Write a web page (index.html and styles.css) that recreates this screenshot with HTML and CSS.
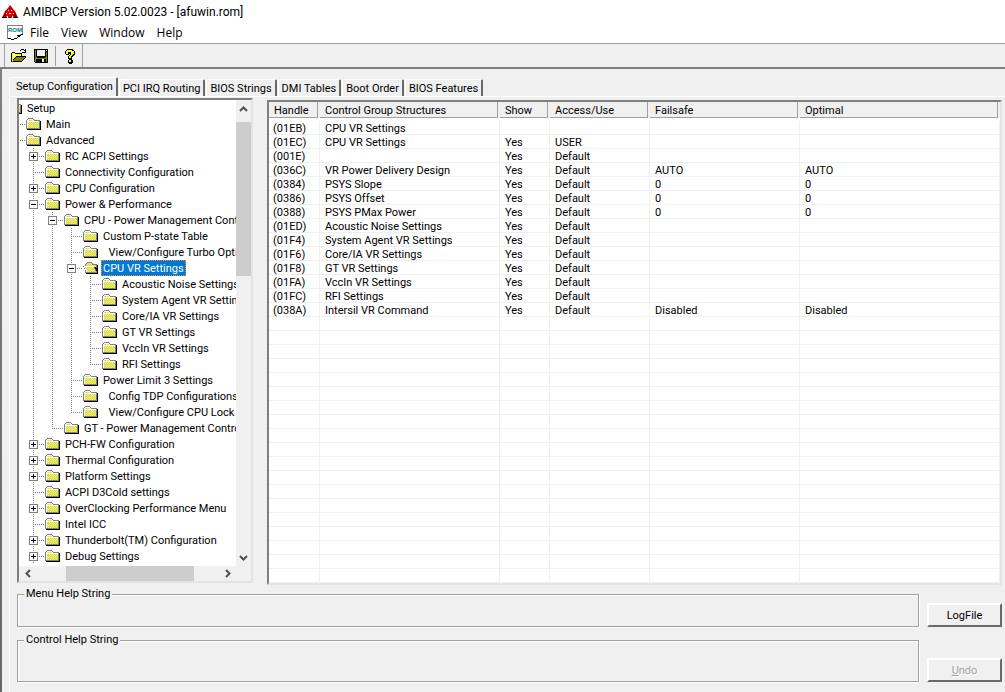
FILE: index.html
```html
<!DOCTYPE html>
<html lang="en">
<head>
<meta charset="utf-8">
<title>AMIBCP Version 5.02.0023 - [afuwin.rom]</title>
<link rel="stylesheet" href="styles.css">
</head>
<body>
<svg class="defs" aria-hidden="true">
  <defs>
    <pattern id="dither" width="2" height="2" patternUnits="userSpaceOnUse">
      <rect width="2" height="2" fill="#c8c8c8"/><path fill="#ff0" d="M0 0h1v1H0zM1 1h1v1H1z"/>
    </pattern>
    <symbol id="folder" viewBox="0 0 16 16">
      <path fill="#808080" d="M2 2h5v1h1v1h6v9H0V4h1V3h1z"/>
      <path fill="#fff" d="M2 3h5v1h1v1h5v1H2v6H1V4h1z"/>
      <path fill="url(#dither)" d="M2 4h5v1h6v7H2z"/>
      <path fill="#fff" d="M2 5h11v1H2z"/>
      <path fill="#000" d="M14 5h1v9H1v-1h13z"/>
    </symbol>
    <symbol id="folder-open" viewBox="0 0 16 16">
      <path fill="#808080" d="M4 2h5v1h1v1h4v9H2V4h1V3h1z"/>
      <path fill="url(#dither)" d="M4 3h5v2h4v7H3V4h1z"/>
      <path fill="#808080" d="M0 6h11v1h1v2h1v2h1v2H3v-2H2V9H1V7H0z"/>
      <path fill="#fff" d="M1 6h10v1H2v1h1v2h1v2H3v-2H2V8H1z"/>
      <path fill="url(#dither)" d="M2 7h9v2h1v2h1v1H4v-2H3V8H2z"/>
      <path fill="#000" d="M14 5h1v9H3v-1h11v-2h-1V9h-1V7h1v1h1z"/>
    </symbol>
  </defs>
</svg>

<header class="titlebar">
  <svg class="app-icon" viewBox="0 0 16 16" aria-hidden="true">
    <path fill="#e80000" d="M8 1l2 3 3 3 3 7H0l3-7 3-3z"/>
    <path fill="#700" d="M8 1l2 3 1 2-2-1zM12 7l4 7h-3l-2-5zM4 7l1 2-4 5H0z"/>
    <path fill="#fff" d="M6 6h1v1H6zM9 6h1v1H9zM4 9h1v1H4zM11 9h1v1h-1zM5 12h1v2H5zM10 12h1v2h-1zM7 9h2v1H7z"/>
    <path fill="#000" d="M0 13h5v1H0zM7 13h2v1H7zM12 13h4v1h-4zM7 4h1v1H7z"/>
  </svg>
  <h1 class="title">AMIBCP Version 5.02.0023 - [afuwin.rom]</h1>
</header>
<nav class="menubar">
  <svg class="doc-icon" viewBox="0 0 16 16" aria-hidden="true">
    <path fill="#fff" stroke="#808080" d="M.5 14V.500h15v8l-5 4"/>
    <text x="1" y="7" class="doc-text">ROM</text>
    <path fill="none" stroke="#000" d="M1 13.500h3M4 14.500h3M7 13.500h3M10 12.500h1M11 11.500h2M13 10.500h1M14 9.500h2M10 10.500h3"/>
  </svg>
  <button class="menu">File</button>
  <button class="menu">View</button>
  <button class="menu">Window</button>
  <button class="menu">Help</button>
</nav>
<div class="toolbar" role="toolbar">
  <div class="tools">
    <button class="tool" aria-label="Open"><svg viewBox="0 0 16 16" aria-hidden="true">
      <path fill="#ff0" d="M1 5h3v1h7v3H5l-4 5z"/><path fill="#fff" d="M2 6h1v1H2zM4 6h1v1H4zM3 7h1v1H3zM5 7h1v1H5zM7 7h1v1H7zM9 7h1v1H9zM2 8h1v1H2zM4 8h1v1H4zM6 8h1v1H6zM8 8h1v1H8zM3 9h1v1H3zM2 10h1v1H2z"/>
      <path fill="#808000" d="M5 9h10l-4 5H1z"/>
      <path fill="#000" d="M1 4h3v1h7v3h-1V6H4V5H1v8h1v1h9v-1h1v-1h1v-1h1v-1h1V8H5v1h9v1h-1v1h-1v1h-1v1H1v1H0V5h1zM4 9h1v1H4zM3 10h1v1H3zM2 11h1v1H2zM9 2h1v1H9zM10 1h3v1h-3zM13 2h1v1h-1zM14 1h1v4h-4V4h3z"/>
    </svg></button>
    <button class="tool" aria-label="Save"><svg viewBox="0 0 16 16" aria-hidden="true">
      <path fill="#000" d="M1 1h14v14H2l-1-1z"/><path fill="#808000" d="M2 2h1v7h1v1h8V9h1V4h1v10h-1v-3H3v3H2z"/>
      <path fill="#efefef" d="M4 2h8v6H4zM13 2h1v1h-1zM9 11h2v3H9z"/>
    </svg></button>
    <span class="tool-sep"></span>
    <button class="tool" aria-label="Help"><svg viewBox="0 0 16 16" aria-hidden="true">
      <path fill="#000" d="M5 1h6v1h1v1h1v4h-1v1h-1v1h-1v2H6V8h1V7h1V6H7v1H4V6H3V3h1V2h1zM7 11h3v1h1v3h-1v1H7v-1H6v-3h1z"/>
      <path fill="#ff0" d="M5 2h5v1h2v3h-1v1h-1v1H9v2H7V8h1V7h1V4H6v2H4V3h1zM7 12h2v2H7z"/>
    </svg></button>
  </div>
</div>

<main class="client">
  <div class="tabs" role="tablist">
    <button class="tab tab-active" role="tab" aria-selected="true">Setup Configuration</button>
    <button class="tab" role="tab">PCI IRQ Routing</button>
    <button class="tab" role="tab">BIOS Strings</button>
    <button class="tab" role="tab">DMI Tables</button>
    <button class="tab" role="tab">Boot Order</button>
    <button class="tab" role="tab">BIOS Features</button>
  </div>
  <section class="page">
    <div class="panes">
      <div class="tree-box">
        <div class="tree-view">
          <ul class="tree" role="tree">
            <li><div class="row row-root"><svg class="folder"><use href="#folder"/></svg><span class="label">Setup</span></div>
              <ul>
                <li><div class="row"><svg class="folder"><use href="#folder"/></svg><span class="label">Main</span></div></li>
                <li><div class="row"><svg class="folder"><use href="#folder"/></svg><span class="label">Advanced</span></div>
                  <ul>
                    <li><div class="row"><button class="twist plus" aria-label="Expand"></button><svg class="folder"><use href="#folder"/></svg><span class="label">RC ACPI Settings</span></div></li>
                    <li><div class="row"><svg class="folder"><use href="#folder"/></svg><span class="label">Connectivity Configuration</span></div></li>
                    <li><div class="row"><button class="twist plus" aria-label="Expand"></button><svg class="folder"><use href="#folder"/></svg><span class="label">CPU Configuration</span></div></li>
                    <li><div class="row"><button class="twist" aria-label="Collapse"></button><svg class="folder"><use href="#folder"/></svg><span class="label">Power &amp; Performance</span></div>
                      <ul>
                        <li><div class="row"><button class="twist" aria-label="Collapse"></button><svg class="folder"><use href="#folder"/></svg><span class="label">CPU - Power Management Control</span></div>
                          <ul>
                            <li><div class="row"><svg class="folder"><use href="#folder"/></svg><span class="label">Custom P-state Table</span></div></li>
                            <li><div class="row"><svg class="folder"><use href="#folder"/></svg><span class="label">  View/Configure Turbo Options</span></div></li>
                            <li><div class="row"><button class="twist" aria-label="Collapse"></button><svg class="folder"><use href="#folder-open"/></svg><span class="label selected">CPU VR Settings</span></div>
                              <ul>
                                <li><div class="row"><svg class="folder"><use href="#folder"/></svg><span class="label">Acoustic Noise Settings</span></div></li>
                                <li><div class="row"><svg class="folder"><use href="#folder"/></svg><span class="label">System Agent VR Settings</span></div></li>
                                <li><div class="row"><svg class="folder"><use href="#folder"/></svg><span class="label">Core/IA VR Settings</span></div></li>
                                <li><div class="row"><svg class="folder"><use href="#folder"/></svg><span class="label">GT VR Settings</span></div></li>
                                <li><div class="row"><svg class="folder"><use href="#folder"/></svg><span class="label">VccIn VR Settings</span></div></li>
                                <li><div class="row"><svg class="folder"><use href="#folder"/></svg><span class="label">RFI Settings</span></div></li>
                              </ul>
                            </li>
                            <li><div class="row"><svg class="folder"><use href="#folder"/></svg><span class="label">Power Limit 3 Settings</span></div></li>
                            <li><div class="row"><svg class="folder"><use href="#folder"/></svg><span class="label">  Config TDP Configurations</span></div></li>
                            <li><div class="row"><svg class="folder"><use href="#folder"/></svg><span class="label">  View/Configure CPU Lock</span></div></li>
                          </ul>
                        </li>
                        <li><div class="row"><svg class="folder"><use href="#folder"/></svg><span class="label">GT - Power Management Control</span></div></li>
                      </ul>
                    </li>
                    <li><div class="row"><button class="twist plus" aria-label="Expand"></button><svg class="folder"><use href="#folder"/></svg><span class="label">PCH-FW Configuration</span></div></li>
                    <li><div class="row"><button class="twist plus" aria-label="Expand"></button><svg class="folder"><use href="#folder"/></svg><span class="label">Thermal Configuration</span></div></li>
                    <li><div class="row"><button class="twist plus" aria-label="Expand"></button><svg class="folder"><use href="#folder"/></svg><span class="label">Platform Settings</span></div></li>
                    <li><div class="row"><svg class="folder"><use href="#folder"/></svg><span class="label">ACPI D3Cold settings</span></div></li>
                    <li><div class="row"><button class="twist plus" aria-label="Expand"></button><svg class="folder"><use href="#folder"/></svg><span class="label">OverClocking Performance Menu</span></div></li>
                    <li><div class="row"><svg class="folder"><use href="#folder"/></svg><span class="label">Intel ICC</span></div></li>
                    <li><div class="row"><button class="twist plus" aria-label="Expand"></button><svg class="folder"><use href="#folder"/></svg><span class="label">Thunderbolt(TM) Configuration</span></div></li>
                    <li class="more"><div class="row"><button class="twist plus" aria-label="Expand"></button><svg class="folder"><use href="#folder"/></svg><span class="label">Debug Settings</span></div></li>
                  </ul>
                </li>
              </ul>
            </li>
          </ul>
        </div>
        <div class="vscroll">
          <button class="arrow" aria-label="Scroll up"><svg viewBox="0 0 9 6" aria-hidden="true"><path d="M1 5l3.500-3.500L8 5"/></svg></button>
          <span class="vthumb"></span>
          <button class="arrow" aria-label="Scroll down"><svg viewBox="0 0 9 6" aria-hidden="true"><path d="M1 1l3.500 3.500L8 1"/></svg></button>
        </div>
        <div class="hscroll">
          <button class="arrow" aria-label="Scroll left"><svg class="side" viewBox="0 0 6 9" aria-hidden="true"><path d="M5 1L1.500 4.500 5 8"/></svg></button>
          <span class="hthumb"></span>
          <button class="arrow" aria-label="Scroll right"><svg class="side" viewBox="0 0 6 9" aria-hidden="true"><path d="M1 1l3.500 3.500L1 8"/></svg></button>
        </div>
      </div>

      <div class="list-box">
        <table class="list">
          <colgroup><col class="c-handle"><col class="c-name"><col class="c-show"><col class="c-access"><col class="c-failsafe"><col></colgroup>
          <thead><tr><th><span>Handle</span></th><th><span>Control Group Structures</span></th><th><span>Show</span></th><th><span>Access/Use</span></th><th><span>Failsafe</span></th><th><span>Optimal</span></th></tr></thead>
          <tbody>
            <tr><td>(01EB)</td><td>CPU VR Settings</td><td></td><td></td><td></td><td></td></tr>
            <tr><td>(01EC)</td><td>CPU VR Settings</td><td>Yes</td><td>USER</td><td></td><td></td></tr>
            <tr><td>(001E)</td><td></td><td>Yes</td><td>Default</td><td></td><td></td></tr>
            <tr><td>(036C)</td><td>VR Power Delivery Design</td><td>Yes</td><td>Default</td><td>AUTO</td><td>AUTO</td></tr>
            <tr><td>(0384)</td><td>PSYS Slope</td><td>Yes</td><td>Default</td><td>0</td><td>0</td></tr>
            <tr><td>(0386)</td><td>PSYS Offset</td><td>Yes</td><td>Default</td><td>0</td><td>0</td></tr>
            <tr><td>(0388)</td><td>PSYS PMax Power</td><td>Yes</td><td>Default</td><td>0</td><td>0</td></tr>
            <tr><td>(01ED)</td><td>Acoustic Noise Settings</td><td>Yes</td><td>Default</td><td></td><td></td></tr>
            <tr><td>(01F4)</td><td>System Agent VR Settings</td><td>Yes</td><td>Default</td><td></td><td></td></tr>
            <tr><td>(01F6)</td><td>Core/IA VR Settings</td><td>Yes</td><td>Default</td><td></td><td></td></tr>
            <tr><td>(01F8)</td><td>GT VR Settings</td><td>Yes</td><td>Default</td><td></td><td></td></tr>
            <tr><td>(01FA)</td><td>VccIn VR Settings</td><td>Yes</td><td>Default</td><td></td><td></td></tr>
            <tr><td>(01FC)</td><td>RFI Settings</td><td>Yes</td><td>Default</td><td></td><td></td></tr>
            <tr><td>(038A)</td><td>Intersil VR Command</td><td>Yes</td><td>Default</td><td>Disabled</td><td>Disabled</td></tr>
          </tbody>
        </table>
      </div>
    </div>

    <div class="help-row">
      <fieldset class="help help-menu"><legend>Menu Help String</legend></fieldset>
      <button class="push">LogFile</button>
    </div>
    <div class="help-row help-row-last">
      <fieldset class="help help-control"><legend>Control Help String</legend></fieldset>
      <button class="push" disabled><u>U</u>ndo</button>
    </div>
  </section>
</main>
</body>
</html>
```
FILE: styles.css
```css
* { box-sizing: border-box; }

body {
  margin: 0;
  height: 100vh;
  display: flex;
  flex-direction: column;
  overflow: hidden;
  background: #f0f0f0;
  color: #000;
  font: 11px/14px Roboto, "Liberation Sans", sans-serif;
}

button {
  margin: 0;
  padding: 0;
  border: 0;
  background: none;
  color: inherit;
  font: inherit;
}

ul { margin: 0; padding: 0; list-style: none; }

svg { display: block; shape-rendering: crispEdges; }

.defs { position: absolute; width: 0; height: 0; }

/* Title and menus */
.titlebar {
  display: flex;
  align-items: center;
  gap: 5px;
  height: 23px;
  padding-left: 2px;
  background: #fff;
}
.app-icon { width: 16px; height: 16px; shape-rendering: auto; }
.title {
  margin: 0;
  font: 12px/20px Roboto, sans-serif;
}
.menubar {
  display: flex;
  align-items: center;
  height: 20px;
  padding-left: 7px;
  background: #fff;
}
.doc-icon { width: 16px; height: 16px; margin-right: 1px; }
.doc-text { font: bold 6px "Liberation Sans", sans-serif; fill: #008080; }
.menu {
  padding: 0 6px;
  font: 12px/18px "Open Sans", sans-serif;
}

/* Toolbar */
.toolbar {
  height: 24px;
  padding-left: 4px;
  border-top: 1px solid #a0a0a0;
  display: flex;
}
.tools {
  display: flex;
  align-items: center;
  padding: 0 4px 0 6px;
  border-left: 1px solid #a0a0a0;
  border-right: 1px solid #a0a0a0;
}
.tool { width: 22px; height: 20px; }
.tool svg { width: 16px; height: 16px; }
.tool-sep { width: 1px; height: 20px; background: #a0a0a0; margin-right: 6px; }
.tool-sep + .tool { width: 16px; }

/* Client area */
.client {
  flex: 1;
  min-height: 0;
  display: flex;
  flex-direction: column;
  padding: 8px 0 0 7px;
  border-top: 2px solid #696969;
  border-left: 2px solid #696969;
  border-image: linear-gradient(#808080, #696969) 1;
}
.tabs { display: flex; align-items: flex-end; height: 19px; flex: none; }
.tab {
  height: 17px;
  padding: 1px 3px 0;
  margin-left: 1px;
  border: 1px solid #fff;
  border-right: 2px solid #696969;
  border-bottom: 0;
  border-radius: 2px 2px 0 0;
}
.tab-active { height: 19px; margin-left: 0; padding: 0 3px 1px 6px; }
.page {
  flex: 1;
  min-height: 0;
  display: flex;
  flex-direction: column;
  padding: 1px 3px 10px 7px;
  border-top: 1px solid #fff;
  border-left: 1px solid #fff;
}
.panes {
  flex: 1;
  min-height: 0;
  display: flex;
  gap: 14px;
}

/* Tree */
.tree-box, .list-box {
  border: 2px solid;
  border-color: #808080 #e3e3e3 #e3e3e3 #808080;
}
.tree-box {
  flex: 0 0 236px;
  margin-bottom: 2px;
  display: grid;
  grid-template: minmax(0, 1fr) 15px / minmax(0, 1fr) 15px;
}
.tree-view { background: #fff; overflow: hidden; }
.tree { margin-left: -28px; }
.tree ul { padding-left: 19px; }
.tree li {
  background: repeating-linear-gradient(#808080 0 1px, transparent 1px 2px) 4px 0 / 1px 100% no-repeat;
}
.tree li:last-child { background-size: 1px 8px; }
.tree li.more { background-size: 1px 100%; }
.row {
  display: flex;
  align-items: center;
  height: 16px;
  padding-left: 16px;
  background: repeating-linear-gradient(90deg, #808080 0 1px, transparent 1px 2px) 4px 8px / 12px 1px no-repeat;
}
.twist {
  flex: none;
  width: 9px;
  height: 9px;
  margin: 0 7px 0 -16px;
  border: 1px solid #808080;
  background: linear-gradient(#000, #000) center / 5px 1px no-repeat #fff;
}
.plus {
  background: linear-gradient(#000, #000) center / 5px 1px no-repeat,
    linear-gradient(#000, #000) center / 1px 5px no-repeat #fff;
}
.folder { flex: none; width: 16px; height: 16px; margin-right: 2px; }
.label { padding: 2px 2px 0; line-height: 14px; white-space: pre; }
.selected {
  background: #0078d7;
  color: #fff;
  outline: 1px dotted #ff8728;
  outline-offset: -1px;
}

/* Scrollbars */
.vscroll { display: flex; flex-direction: column; }
.hscroll { display: flex; }
.arrow { display: grid; place-items: center; width: 15px; height: 17px; }
.arrow svg { width: 9px; height: 6px; shape-rendering: auto; }
.arrow .side { width: 6px; height: 9px; }
.arrow path { fill: none; stroke: #505050; stroke-width: 2; }
.vthumb { height: 154px; margin: 5px 0 auto; background: #cdcdcd; }
.hthumb { width: 128px; margin: 0 auto 0 30px; background: #cdcdcd; }
.hscroll .arrow { width: 17px; height: 15px; }

/* List */
.list-box {
  flex: 1;
  min-width: 0;
  margin-top: 2px;
  overflow: hidden;
  background:
    linear-gradient(#f0f0f0, #f0f0f0) 50px 0 / 1px 100% no-repeat,
    linear-gradient(#f0f0f0, #f0f0f0) 230px 0 / 1px 100% no-repeat,
    linear-gradient(#f0f0f0, #f0f0f0) 280px 0 / 1px 100% no-repeat,
    linear-gradient(#f0f0f0, #f0f0f0) 380px 0 / 1px 100% no-repeat,
    linear-gradient(#f0f0f0, #f0f0f0) 530px 0 / 1px 100% no-repeat,
    linear-gradient(#f0f0f0, #f0f0f0) 100% 0 / 1px 100% no-repeat,
    linear-gradient(transparent 13px, #f0f0f0 13px) 0 5px / 100% 14px,
    #fff;
}
.list {
  width: 100%;
  table-layout: fixed;
  border-collapse: separate;
  border-spacing: 0;
}
.c-handle { width: 51px; }
.c-name { width: 180px; }
.c-show { width: 50px; }
.c-access { width: 100px; }
.c-failsafe { width: 150px; }
.list th {
  height: 19px;
  padding: 0 2px 3px 0;
  text-align: left;
  font-weight: normal;
  background: linear-gradient(#f0f0f0 16px, #fff 16px);
}
.list th span {
  display: block;
  height: 16px;
  padding: 2px 0 0 5px;
  border-right: 1px solid #a0a0a0;
  border-bottom: 1px solid #a0a0a0;
}
.list td {
  height: 14px;
  padding: 2px 0 0 5px;
  line-height: 12px;
  white-space: nowrap;
}
.list td:first-child { padding-left: 4px; }

/* Help strings and buttons */
.help-row {
  flex: none;
  display: flex;
  align-items: flex-end;
  gap: 8px;
  margin-top: 2px;
}
.help-row-last { margin-top: 6px; }
.help {
  flex: 1;
  min-width: 0;
  margin: 0;
  padding: 0 6px;
  border: 1px solid #a0a0a0;
  box-shadow: 1px 1px #fff, inset 1px 1px #fff;
}
.help-menu { height: 40px; }
.help-control { height: 49px; }
.help legend { padding: 0 2px; background: #f0f0f0; }
.push {
  width: 75px;
  height: 24px;
  padding-top: 2px;
  border: 2px solid;
  border-color: #fff #696969 #696969 #fff;
}
.push:disabled { color: #a0a0a0; text-shadow: 1px 1px #fff; }
```
